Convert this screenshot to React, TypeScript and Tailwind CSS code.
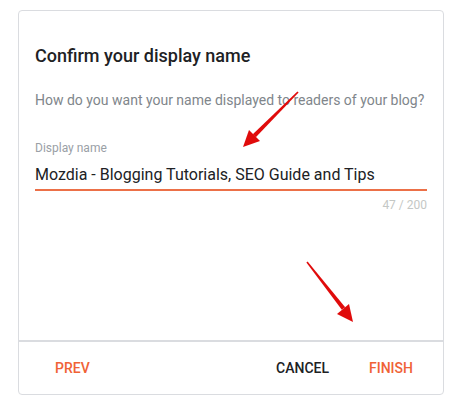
import React from 'react';

const Arrows: React.FC = () => (
  <svg className="absolute inset-0 pointer-events-none" width="462" height="410" viewBox="0 0 462 410">
    {/* upper arrow, pointing at the input */}
    <polygon points="297.4,91.4 298.6,92.6 255.8,137.2 252.8,134.2" fill="#e00b0b" />
    <polygon points="243,147 249,130 260,141" fill="#e00b0b" />
    {/* lower arrow, pointing at finish */}
    <polygon points="306.4,262.4 307.6,261.6 345.2,307.2 341.8,309.8" fill="#e00b0b" />
    <polygon points="353,322 337,314 349,304" fill="#e00b0b" />
  </svg>
);

export default function App() {
  return (
    <div className="relative w-[462px] h-[410px] bg-white" style={{ fontFamily: 'Roboto, "Liberation Sans", sans-serif' }}>
      <div className="pt-[10px] pl-[18px]">
        <div className="w-[426px] h-[385px] border border-[#dadce0] rounded-[4px] flex flex-col">
          <div className="flex-1 px-4 pt-[33px]">
            <h2 className="text-[18px] leading-[24px] font-medium text-[#202124]">Confirm your display name</h2>
            <p className="mt-[22px] text-[14px] leading-[20px] text-[#80868b]">
              How do you want your name displayed to readers of your blog?
            </p>
            <div className="mt-[30px]">
              <div className="text-[12px] leading-[16px] text-[#9aa0a6]">Display name</div>
              <div className="mt-[9px] pb-[4px] text-[16px] leading-[20px] text-[#202124]">
                Mozdia - Blogging Tutorials, SEO Guide and Tips
              </div>
              <div className="h-[2px] bg-[#ec7048]" />
              <div className="mt-[6px] text-right text-[12px] leading-[16px] text-[#c4c7c5]">47 / 200</div>
            </div>
          </div>
          <div className="h-[54px] border-t-2 border-[#dadce0] flex items-center px-[36px] text-[14px] font-medium uppercase">
            <span className="text-[#f06236]">Prev</span>
            <span className="ml-auto text-[#202124]">Cancel</span>
            <span className="ml-[40px] mr-[-6px] text-[#f06236]">Finish</span>
          </div>
        </div>
      </div>
      <Arrows />
    </div>
  );
}
